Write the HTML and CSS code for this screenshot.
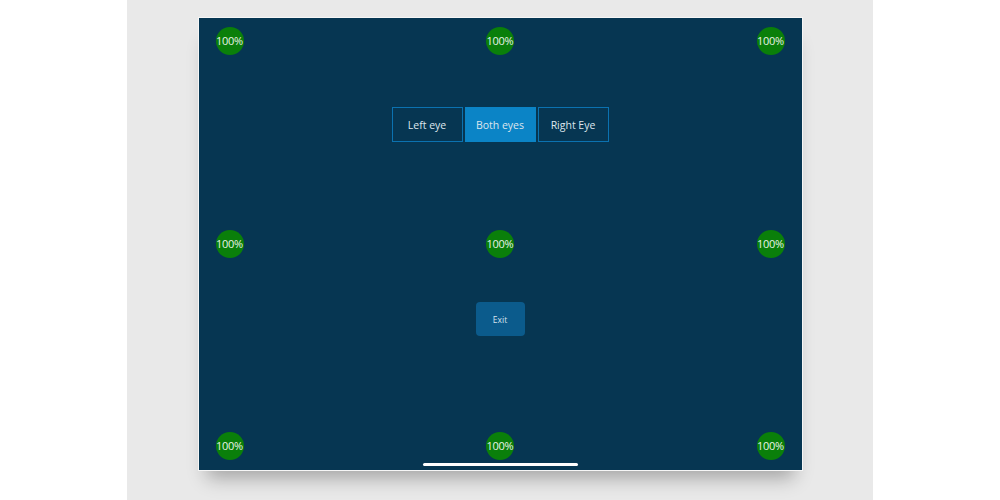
FILE: index.html
```html
<!DOCTYPE html>
<html>
<head>
<meta charset="utf-8">
<link rel="stylesheet" href="styles.css">
</head>
<body>
<div class="panel">
  <div class="screen">
    <div class="row">
      <div class="dot">100%</div><div class="dot">100%</div><div class="dot">100%</div>
    </div>
    <div class="seg">
      <div class="btn">Left eye</div>
      <div class="btn active">Both eyes</div>
      <div class="btn">Right Eye</div>
    </div>
    <div class="row mid">
      <div class="dot">100%</div><div class="dot">100%</div><div class="dot">100%</div>
    </div>
    <div class="exit">Exit</div>
    <div class="row bottom">
      <div class="dot">100%</div><div class="dot">100%</div><div class="dot">100%</div>
    </div>
    <div class="home"></div>
  </div>
</div>
</body>
</html>
```
FILE: styles.css
```css
html, body {
  margin: 0;
  padding: 0;
  background: #ffffff;
  height: 100%;
}
body {
  font-family: "Open Sans", "Liberation Sans", sans-serif;
}
.panel {
  width: 746px;
  height: 500px;
  margin: 0 auto;
  background: #e9e9e9;
  padding-top: 18px;
  box-sizing: border-box;
  overflow: hidden;
}
.screen {
  position: relative;
  width: 603px;
  height: 452px;
  margin: 0 auto;
  background: #063652;
  box-sizing: border-box;
  padding: 9px 17px 10px;
  display: flex;
  flex-direction: column;
  align-items: center;
  box-shadow: 0 0 0 1px #f6f6f6, 0 16px 18px -8px rgba(0,0,0,0.3);
}
.row {
  width: 100%;
  display: flex;
  justify-content: space-between;
}
.mid { margin-top: 88px; }
.bottom { margin-top: 96px; }
.dot {
  width: 28px;
  height: 28px;
  border-radius: 50%;
  background: #0a7f0a;
  color: #e8f2e8;
  font-size: 11px;
  line-height: 28px;
  text-align: center;
  letter-spacing: -0.3px;
}
.seg {
  margin-top: 52px;
  display: flex;
  gap: 2px;
}
.btn {
  width: 71px;
  height: 35px;
  box-sizing: border-box;
  border: 1px solid #0b72b0;
  color: #dde6ee;
  font-size: 10.5px;
  display: flex;
  align-items: center;
  justify-content: center;
}
.btn.active {
  background: #0b84c6;
  border-color: #0b84c6;
}
.exit {
  margin-top: 44px;
  width: 49px;
  height: 34px;
  border-radius: 4px;
  background: #0b5b8c;
  color: #d6e2ec;
  font-size: 8.5px;
  display: flex;
  align-items: center;
  justify-content: center;
}
.home {
  position: absolute;
  left: 224px;
  bottom: 4px;
  width: 155px;
  height: 3px;
  border-radius: 2px;
  background: #ffffff;
}
```
